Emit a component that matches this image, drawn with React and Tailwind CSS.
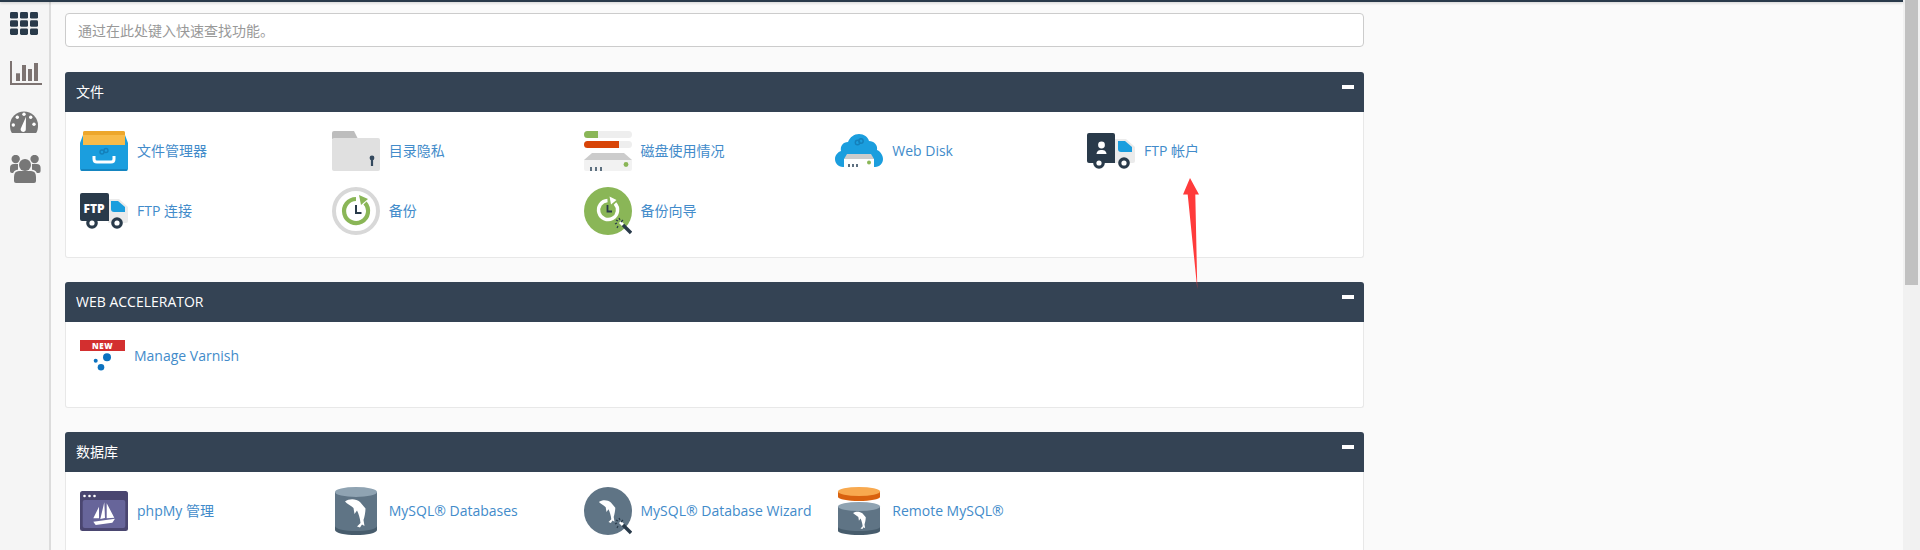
import React from "react";

const dolphin =
  "M13 14.5C17 11.5 24 11.5 28 15L33.5 21.5C33.5 25 32.5 30 31.5 33L32.5 39L30 37.5L28 40.5L25 39.5L28.5 36C28 31 26.5 26.5 25 23.5L22.5 27L21.5 21C19 18.5 15 17 13 14.5Z";

const Svg = ({ children, w = 48 }) => (
  <svg viewBox={`0 0 ${w} 48`} width={w} height={48} className="shrink-0">
    {children}
  </svg>
);

const Wand = () => (
  <g>
    <path d="M36 35L39 38" stroke="#fff" strokeWidth="3" />
    <path d="M39 38L47 46" stroke="#293a4a" strokeWidth="3.4" />
    <path
      d="M32 33l2 1M35 31l1 2M39 33l-2 2M31 37l2-1M33 41l1-2"
      stroke="#293a4a"
      strokeWidth="1.2"
    />
  </g>
);

const Wheels = () => (
  <g>
    <circle cx="12" cy="36" r="5.8" fill="#293a4a" />
    <circle cx="12" cy="36" r="2.6" fill="#fff" />
    <circle cx="37" cy="36" r="5.8" fill="#293a4a" />
    <circle cx="37" cy="36" r="2.6" fill="#fff" />
  </g>
);

const Cab = () => (
  <g>
    <path d="M28 12H39L48 20V34Q48 36 46 36H28Z" fill="#ebebeb" />
    <path d="M31 14H38L45 20V25H34Q31 25 31 22Z" fill="#1b9ede" />
  </g>
);

const FileManagerIcon = () => (
  <Svg>
    <path d="M3 18V6Q3 4 5 4H43Q45 4 45 6V18Z" fill="#f8bb4a" />
    <path d="M3 8V6Q3 4 5 4H43Q45 4 45 6V8Z" fill="#eda72c" />
    <path d="M0 16L3 8V18H45V8L48 16V42Q48 44 46 44H2Q0 44 0 42Z" fill="#1b9ede" />
    <path d="M1 42H47V43Q47 44 46 44H2Q1 44 1 43Z" fill="#1585c0" />
    <path
      d="M14 29V32Q14 35 17 35H31Q34 35 34 32V29"
      fill="none"
      stroke="#fff"
      strokeWidth="3"
    />
    <circle cx="22" cy="25" r="2" fill="none" stroke="#1480bb" strokeWidth="1.4" />
    <circle cx="26" cy="23.5" r="2" fill="none" stroke="#1480bb" strokeWidth="1.4" />
  </Svg>
);

const FolderIcon = () => (
  <Svg>
    <path d="M0 12V6Q0 4 2 4H22L26 12Z" fill="#bdbdbd" />
    <rect x="0" y="11" width="48" height="33" rx="2" fill="#e0e0e0" />
    <circle cx="40" cy="31" r="2.4" fill="#34495e" />
    <rect x="38.9" y="31" width="2.2" height="8" fill="#34495e" />
  </Svg>
);

const DiskIcon = () => (
  <Svg>
    <rect y="4" width="48" height="7" rx="3.5" fill="#eee" />
    <path d="M3.5 4H14V11H3.5A3.5 3.5 0 0 1 3.5 4Z" fill="#8ab657" />
    <rect y="14" width="48" height="7" rx="3.5" fill="#eee" />
    <path d="M3.5 14H35V21H3.5A3.5 3.5 0 0 1 3.5 14Z" fill="#d84407" />
    <path d="M8 26H40L48 33H0Z" fill="#ccc" />
    <path d="M0 33H48V42Q48 44 46 44H2Q0 44 0 42Z" fill="#f2f2f2" />
    <path d="M6 40h2v4H6zM11 40h2v4h-2zM16 40h2v4h-2z" fill="#5d7080" />
    <circle cx="42" cy="37.5" r="2.4" fill="#8ab657" />
  </Svg>
);

const WebDiskIcon = () => (
  <Svg>
    <path
      d="M8 40C3 40 0 36 0 32C0 28 3 25 6 24C5 19 8 15 13 15C15 10 19 7 24 7C29 7 33 10 34 14C39 14 43 18 42 23C45 24 48 28 48 32C48 36 45 40 40 40Z"
      fill="#1b9ede"
    />
    <path d="M12 27H36L39 32H9Z" fill="#ccc" />
    <rect x="9" y="32" width="30" height="8" fill="#fff" />
    <path d="M13 37h2v3h-2zM17 37h2v3h-2zM21 37h2v3h-2z" fill="#5d7080" />
    <circle cx="34" cy="35.5" r="2" fill="#8ab657" />
    <circle cx="22.5" cy="15.5" r="2.2" fill="none" stroke="#1480bb" strokeWidth="1.4" />
    <circle cx="26" cy="14" r="2.2" fill="none" stroke="#1480bb" strokeWidth="1.4" />
  </Svg>
);

const FtpAccountIcon = () => (
  <Svg>
    <Cab />
    <path d="M2 6H26Q28 6 28 8V36H2Q0 36 0 34V8Q0 6 2 6Z" fill="#293a4a" />
    <circle cx="14.5" cy="18" r="3.4" fill="#fff" />
    <path d="M9.5 27C10 23.5 12 23 14.5 23C17 23 19 23.5 19.5 27Z" fill="#fff" />
    <Wheels />
  </Svg>
);

const FtpIcon = () => (
  <Svg>
    <Cab />
    <path d="M2 6H27Q29 6 29 8V34H2Q0 34 0 32V8Q0 6 2 6Z" fill="#293a4a" />
    <text
      x="14"
      y="25.5"
      textAnchor="middle"
      fontSize="12"
      fontWeight="800"
      fill="#fff"
      fontFamily="Open Sans, sans-serif"
    >
      FTP
    </text>
    <Wheels />
  </Svg>
);

const BackupIcon = () => (
  <Svg>
    <circle cx="24" cy="24" r="22" fill="#fff" stroke="#d8d8d8" strokeWidth="4" />
    <path
      d="M33 16A12 12 0 1 1 24 12"
      fill="none"
      stroke="#8ab657"
      strokeWidth="4.2"
    />
    <path d="M27 8L36 12L29 18Z" fill="#8ab657" />
    <path d="M24 18V26H29.5" fill="none" stroke="#293a4a" strokeWidth="2" />
  </Svg>
);

const BackupWizardIcon = () => (
  <Svg>
    <circle cx="24" cy="24" r="24" fill="#8ab657" />
    <path d="M31 16.5A9.5 9.5 0 1 1 23.5 13.5" fill="none" stroke="#fff" strokeWidth="3.4" />
    <path d="M25.5 9.5L32.5 13L27 17.5Z" fill="#fff" />
    <path d="M23.5 18V24.5H28" fill="none" stroke="#293a4a" strokeWidth="1.8" />
    <Wand />
  </Svg>
);

const VarnishIcon = () => (
  <Svg w={45}>
    <rect y="3" width="45" height="11" fill="#d32f2f" />
    <text
      x="22.5"
      y="11.8"
      textAnchor="middle"
      fontSize="8"
      fontWeight="800"
      letterSpacing="0.6"
      fill="#fff"
      fontFamily="Open Sans, sans-serif"
    >
      NEW
    </text>
    <circle cx="27" cy="20.3" r="4" fill="#0b72c0" />
    <circle cx="21" cy="30.3" r="3.3" fill="#0b72c0" />
    <circle cx="15.7" cy="23.7" r="2" fill="#0b72c0" />
  </Svg>
);

const PhpMyIcon = () => (
  <Svg>
    <rect y="4" width="48" height="40" rx="2.5" fill="#4a4670" />
    <rect x="2.7" y="13" width="42.6" height="28" rx="2" fill="#67659a" />
    <circle cx="4.5" cy="9" r="1.3" fill="#fff" />
    <circle cx="9.5" cy="9" r="1.3" fill="#fff" />
    <circle cx="14.5" cy="9" r="1.3" fill="#fff" />
    <path
      d="M19 19.7L13.3 31.3H19ZM24.3 15.3L20.3 32L25 31ZM26.7 16.3L34.3 30.7L26.7 31.3Z"
      fill="#fff"
    />
    <path d="M13.3 34.7L35 31.8L32.3 35.7L15.7 38Z" fill="#fff" />
  </Svg>
);

const DbIcon = () => (
  <Svg>
    <path d="M3 5V43C3 46 13 48 24 48C35 48 45 46 45 43V5Z" fill="#475c6c" />
    <path d="M3 5V39C3 42 13 44 24 44C35 44 45 42 45 39V5Z" fill="#5f7485" />
    <ellipse cx="24" cy="5" rx="21" ry="5" fill="#8fa3b2" />
    <path d={dolphin} fill="#fff" />
  </Svg>
);

const DbWizardIcon = () => (
  <Svg>
    <circle cx="24" cy="24" r="24" fill="#5f7485" />
    <path d={dolphin} fill="#fff" transform="translate(4.5,3.5) scale(0.8)" />
    <Wand />
  </Svg>
);

const RemoteDbIcon = () => (
  <Svg>
    <path d="M3 5V10C3 12 13 14 24 14C35 14 45 12 45 10V5Z" fill="#d9620f" />
    <ellipse cx="24" cy="4.5" rx="21" ry="4.5" fill="#f8a94f" />
    <path d="M3 20V44C3 46 13 48 24 48C35 48 45 46 45 44V20Z" fill="#475c6c" />
    <path d="M3 20V40C3 42 13 44 24 44C35 44 45 42 45 40V20Z" fill="#5f7485" />
    <ellipse cx="24" cy="19.5" rx="21" ry="4.5" fill="#8fa3b2" />
    <path d={dolphin} fill="#fff" transform="translate(10,17) scale(0.62)" />
  </Svg>
);

const sections = [
  {
    title: "文件",
    items: [
      { icon: <FileManagerIcon />, label: "文件管理器" },
      { icon: <FolderIcon />, label: "目录隐私" },
      { icon: <DiskIcon />, label: "磁盘使用情况" },
      { icon: <WebDiskIcon />, label: "Web Disk" },
      { icon: <FtpAccountIcon />, label: "FTP 帐户" },
      { icon: <FtpIcon />, label: "FTP 连接" },
      { icon: <BackupIcon />, label: "备份" },
      { icon: <BackupWizardIcon />, label: "备份向导" },
    ],
  },
  {
    title: "WEB ACCELERATOR",
    items: [{ icon: <VarnishIcon />, label: "Manage Varnish", labelClass: "-mt-[10px]" }],
  },
  {
    title: "数据库",
    items: [
      { icon: <PhpMyIcon />, label: "phpMy 管理" },
      { icon: <DbIcon />, label: "MySQL® Databases" },
      { icon: <DbWizardIcon />, label: "MySQL® Database Wizard" },
      { icon: <RemoteDbIcon />, label: "Remote MySQL®" },
    ],
  },
];

const Sidebar = () => (
  <div className="w-[51px] shrink-0 bg-[#f5f5f5] border-r-2 border-[#dcdcdc] pl-[10px] pt-[10px]">
    {/* grid */}
    <svg width="28" height="23" className="block" fill="#293a4a">
      <rect x="0" y="0" width="8" height="6.6" rx="1.4" />
      <rect x="10" y="0" width="8" height="6.6" rx="1.4" />
      <rect x="20" y="0" width="8" height="6.6" rx="1.4" />
      <rect x="0" y="8.2" width="8" height="6.6" rx="1.4" />
      <rect x="10" y="8.2" width="8" height="6.6" rx="1.4" />
      <rect x="20" y="8.2" width="8" height="6.6" rx="1.4" />
      <rect x="0" y="16.4" width="8" height="6.6" rx="1.4" />
      <rect x="10" y="16.4" width="8" height="6.6" rx="1.4" />
      <rect x="20" y="16.4" width="8" height="6.6" rx="1.4" />
    </svg>
    {/* stats */}
    <svg width="33" height="24" className="block mt-[26px]" fill="#7d7371">
      <path d="M0 0H2V22H32V24H0Z" />
      <rect x="6" y="12.3" width="4" height="7.7" />
      <rect x="12" y="4" width="4" height="16" />
      <rect x="18" y="8" width="4" height="12" />
      <rect x="24" y="2" width="4" height="18" />
    </svg>
    {/* gauge */}
    <svg width="28" height="22" className="block mt-[26px]">
      <path d="M1.5 21.5C0.5 19.5 0 17 0 14.5A14 14 0 0 1 28 14.5C28 17 27.5 19.5 26.5 21.5Q26 22 25 22H3Q2 22 1.5 21.5Z" fill="#777" />
      <circle cx="3.3" cy="14" r="1.7" fill="#fff" />
      <circle cx="7.3" cy="6.3" r="1.7" fill="#fff" />
      <circle cx="14" cy="3.3" r="1.7" fill="#fff" />
      <circle cx="20.7" cy="6.3" r="1.7" fill="#fff" />
      <circle cx="24" cy="13.3" r="1.7" fill="#fff" />
      <path d="M16 5.7L15.8 18.5A2.6 2.6 0 1 1 11 17Z" fill="#fff" />
    </svg>
    {/* users */}
    <svg width="31" height="28" className="block mt-[22px]" fill="#777">
      <circle cx="5.7" cy="4" r="4.2" />
      <circle cx="24.6" cy="4" r="4.2" />
      <path d="M0 13Q0 9 4 9H8V18H2Q0 18 0 16Z" />
      <path d="M30.6 13Q30.6 9 26.6 9H22V18H28.6Q30.6 18 30.6 16Z" />
      <circle cx="15" cy="10" r="7" fill="#f5f5f5" />
      <path d="M2.6 28V21Q2.6 14.5 9 14.5H21Q27.4 14.5 27.4 21V28Z" fill="#f5f5f5" />
      <circle cx="15" cy="10" r="6" />
      <path d="M4 22Q4 16 9 16H21Q26 16 26 22V26Q26 28 24 28H6Q4 28 4 26Z" />
    </svg>
  </div>
);

const Panel = ({ title, items }) => (
  <div className="mb-[24px]">
    <div className="h-10 bg-[#344354] rounded-t-[3px] pl-[11px] pr-[10px] flex items-center justify-between text-white text-sm">
      <span>{title}</span>
      <span className="block w-3 h-1 bg-white -mt-[10px]"></span>
    </div>
    <div className="bg-white border border-t-0 border-[#e8e8e8] rounded-b-[3px] pl-[14px] pt-[15px] pb-[22px] grid grid-cols-[repeat(5,251.75px)] gap-y-3">
      {items.map((item) => (
        <div key={item.label} className="flex items-center gap-[9px] h-12">
          {item.icon}
          <a className={`text-sm text-[#428bca] whitespace-nowrap ${item.labelClass || ""}`}>
            {item.label}
          </a>
        </div>
      ))}
    </div>
  </div>
);

const App = () => {
  return (
    <div className="relative flex h-[550px] w-[1920px] overflow-hidden bg-[#fafafa] font-[family-name:'Open_Sans','Noto_Sans_CJK_SC',sans-serif]">
      <div className="flex-1 flex flex-col min-w-0">
        <div className="relative z-10 h-[2px] shrink-0 bg-[#293a4a] shadow-[0_1px_3px_rgba(0,0,0,0.2)]"></div>
        <div className="flex flex-1 min-h-0">
          <Sidebar />
          <div className="flex-1 pl-[14px] pt-[11px]">
            <div className="w-[1299px]">
              <input
                className="block w-full h-[34px] bg-white border border-[#ccc] rounded px-3 text-sm mb-[25px] placeholder:text-[#999]"
                placeholder="通过在此处键入快速查找功能。"
              />
              {sections.map((section) => (
                <Panel key={section.title} title={section.title} items={section.items} />
              ))}
            </div>
          </div>
        </div>
      </div>
      {/* scrollbar */}
      <div className="w-[17px] shrink-0 bg-[#f1f1f1] px-[2px]">
        <div className="h-[285px] bg-[#c1c1c1]"></div>
      </div>
      {/* red annotation arrow */}
      <svg className="absolute left-[1180px] top-[175px] z-20" width="24" height="118">
        <path d="M10 3L19 19.5H15.3L17.3 114L7.7 19.5H3Z" fill="#ff3b3b" />
      </svg>
    </div>
  );
};

export default App;
